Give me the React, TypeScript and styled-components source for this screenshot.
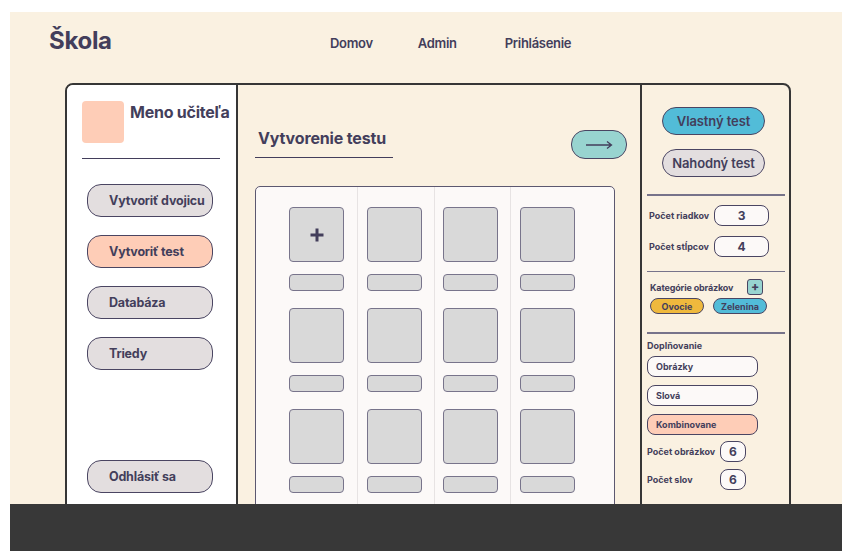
import styled, { createGlobalStyle } from 'styled-components';

const colors = {
  page: '#faf1e1',
  ink: '#433e5b',
  line: '#4a4562',
  frame: '#363636',
  white: '#ffffff',
  paper: '#fcf9f8',
  tile: '#d9d9d9',
  tileLine: '#78748b',
  soft: '#e3dedf',
  peach: '#fecdb7',
  teal: '#98d4d0',
  cyan: '#52bcd8',
  yellow: '#efb93d',
  divider: '#77738a',
  footer: '#383838',
};

const ROWS = 3;
const COLS = 4;

const App = () => {
  return (
    <>
      <GlobalStyle />
      <Frame>
        <Screen>
          <TopBar>
            <Logo>Škola</Logo>
            <Nav>
              <NavLink>Domov</NavLink>
              <NavLink>Admin</NavLink>
              <NavLink>Prihlásenie</NavLink>
            </Nav>
          </TopBar>

          <Card>
            <Side>
              <Profile>
                <Avatar />
                <TeacherName>Meno učiteľa</TeacherName>
              </Profile>
              <SideDivider />
              <Menu>
                <MenuButton>Vytvoriť dvojicu</MenuButton>
                <MenuButton $active>Vytvoriť test</MenuButton>
                <MenuButton>Databáza</MenuButton>
                <MenuButton>Triedy</MenuButton>
              </Menu>
              <Logout>Odhlásiť sa</Logout>
            </Side>

            <Main>
              <HeadingRow>
                <Heading>Vytvorenie testu</Heading>
                <NextButton>
                  <svg width="28" height="10" viewBox="0 0 28 10" fill="none">
                    <path d="M1 5H26.5M22 1.5L26.5 5L22 8.5" stroke={colors.ink} strokeWidth="1.3" />
                  </svg>
                </NextButton>
              </HeadingRow>

              <Board>
                {Array.from({ length: COLS }).map((_, col) => (
                  <Column key={col} $lead={col === 0} $last={col === COLS - 1}>
                    {Array.from({ length: ROWS }).map((__, row) => (
                      <Cell key={row}>
                        <Tile>
                          {col === 0 && row === 0 && (
                            <svg width="14" height="14" viewBox="0 0 14 14">
                              <path d="M7 0.5V13.5M0.5 7H13.5" stroke={colors.ink} strokeWidth="3" />
                            </svg>
                          )}
                        </Tile>
                        <Caption />
                      </Cell>
                    ))}
                  </Column>
                ))}
              </Board>
            </Main>

            <Panel>
              <Modes>
                <ModeButton $tone={colors.cyan}>Vlastný test</ModeButton>
                <ModeButton $tone={colors.soft}>Nahodný test</ModeButton>
              </Modes>

              <PanelDivider $top={17} />
              <Fields $gap={10}>
                <Field>
                  <FieldLabel $width={65}>Počet riadkov</FieldLabel>
                  <ValueBox $width={55}>3</ValueBox>
                </Field>
                <Field>
                  <FieldLabel $width={65}>Počet stĺpcov</FieldLabel>
                  <ValueBox $width={55}>4</ValueBox>
                </Field>
              </Fields>

              <PanelDivider $top={14} />
              <CategoryHead>
                <SmallTitle>Kategórie obrázkov</SmallTitle>
                <AddButton>+</AddButton>
              </CategoryHead>
              <Chips>
                <Chip $tone={colors.yellow}>Ovocie</Chip>
                <Chip $tone={colors.cyan}>Zelenina</Chip>
              </Chips>

              <PanelDivider $top={18} />
              <FillTitle>Doplňovanie</FillTitle>
              <Options>
                <Option>Obrázky</Option>
                <Option>Slová</Option>
                <Option $active>Kombinovane</Option>
              </Options>
              <Fields $gap={7} $top={6}>
                <Field $flush>
                  <FieldLabel $width={73}>Počet obrázkov</FieldLabel>
                  <ValueBox $width={26}>6</ValueBox>
                </Field>
                <Field $flush>
                  <FieldLabel $width={73}>Počet slov</FieldLabel>
                  <ValueBox $width={26}>6</ValueBox>
                </Field>
              </Fields>
            </Panel>
          </Card>
        </Screen>
        <Footer />
      </Frame>
    </>
  );
};

export default App;

const GlobalStyle = createGlobalStyle`
  *, *::before, *::after {
    box-sizing: border-box;
  }
  body {
    margin: 0;
    background: ${colors.white};
    font-family: Inter, 'Noto Sans', sans-serif;
    color: ${colors.ink};
  }
`;

const Frame = styled.div`
  width: 842px;
  height: 551px;
  padding: 12px 0 0 10px;
  display: flex;
  flex-direction: column;
  overflow: hidden;
`;

const Screen = styled.div`
  height: 492px;
  background: ${colors.page};
  overflow: hidden;
`;

const TopBar = styled.header`
  height: 71px;
  display: flex;
  align-items: flex-start;
  padding-left: 39px;
`;

const Logo = styled.h1`
  margin: 15px 0 0;
  font-size: 24px;
  line-height: 28px;
  font-weight: 700;
  letter-spacing: -0.3px;
  width: 281px;
`;

const Nav = styled.nav`
  display: flex;
  gap: 45px;
  margin-top: 23px;
`;

const NavLink = styled.span`
  font-size: 13px;
  line-height: 16px;
  font-weight: 600;
  letter-spacing: -0.3px;
  &:last-child {
    margin-left: 3px;
  }
`;

const Card = styled.section`
  margin-left: 55px;
  width: 726px;
  height: 470px;
  border: 2px solid ${colors.frame};
  border-radius: 8px;
  display: flex;
  overflow: hidden;
`;

const Side = styled.aside`
  width: 171px;
  background: ${colors.white};
  border-right: 2px solid ${colors.frame};
  padding: 16px 0 0 15px;
  display: flex;
  flex-direction: column;
`;

const Profile = styled.div`
  display: flex;
  gap: 6px;
`;

const Avatar = styled.div`
  width: 42px;
  height: 42px;
  border-radius: 4px;
  background: ${colors.peach};
`;

const TeacherName = styled.span`
  margin-top: 1px;
  font-size: 16px;
  line-height: 20px;
  font-weight: 700;
  letter-spacing: -0.25px;
  white-space: nowrap;
`;

const SideDivider = styled.div`
  width: 138px;
  height: 1px;
  background: ${colors.ink};
  margin-top: 15px;
`;

const Menu = styled.nav`
  margin: 25px 0 0 5px;
  display: flex;
  flex-direction: column;
  gap: 18px;
`;

const MenuButton = styled.div<{ $active?: boolean }>`
  width: 126px;
  height: 33px;
  border: 1.5px solid ${colors.line};
  border-radius: 14px;
  background: ${({ $active }) => ($active ? colors.peach : colors.soft)};
  padding-left: 21px;
  display: flex;
  align-items: center;
  font-size: 12.5px;
  font-weight: 700;
  letter-spacing: -0.2px;
  white-space: nowrap;
`;

const Logout = styled(MenuButton)`
  margin: 90px 0 0 5px;
`;

const Main = styled.main`
  width: 404px;
  border-right: 2px solid ${colors.frame};
  padding: 43px 13px 0 17px;
`;

const HeadingRow = styled.div`
  display: flex;
  justify-content: space-between;
  align-items: flex-start;
`;

const Heading = styled.h2`
  margin: 0;
  width: 138px;
  padding: 0 0 9px 3px;
  border-bottom: 1.5px solid ${colors.ink};
  font-size: 16px;
  line-height: 20px;
  font-weight: 700;
  letter-spacing: -0.15px;
  white-space: nowrap;
`;

const NextButton = styled.div`
  margin-top: 2px;
  width: 56px;
  height: 29px;
  border: 1.5px solid ${colors.line};
  border-radius: 14px;
  background: ${colors.teal};
  display: flex;
  align-items: center;
  justify-content: center;
`;

const Board = styled.div`
  margin-top: 27px;
  width: 360px;
  height: 360px;
  background: ${colors.paper};
  border: 1.5px solid #5c5870;
  border-radius: 5px;
  display: flex;
`;

const Column = styled.div<{ $lead?: boolean; $last?: boolean }>`
  width: ${({ $lead }) => ($lead ? '102px' : '76.5px')};
  flex: ${({ $last }) => ($last ? 1 : 'none')};
  padding: 20px 0 0 ${({ $lead }) => ($lead ? '33px' : '8.5px')};
  border-right: ${({ $last }) => ($last ? 'none' : '1.5px solid #e7e3e3')};
  display: flex;
  flex-direction: column;
  gap: 17px;
`;

const Cell = styled.div`
  display: flex;
  flex-direction: column;
  gap: 12px;
`;

const Tile = styled.div`
  width: 55px;
  height: 55px;
  background: ${colors.tile};
  border: 1.5px solid ${colors.tileLine};
  border-radius: 4px;
  display: flex;
  align-items: center;
  justify-content: center;
`;

const Caption = styled.div`
  width: 55px;
  height: 17px;
  background: ${colors.tile};
  border: 1.5px solid ${colors.tileLine};
  border-radius: 4px;
`;

const Panel = styled.aside`
  flex: 1;
  padding: 22px 4px 0 5px;
  display: flex;
  flex-direction: column;
`;

const Modes = styled.div`
  display: flex;
  flex-direction: column;
  gap: 14px;
  padding-left: 15px;
`;

const ModeButton = styled.div<{ $tone: string }>`
  width: 103px;
  height: 28px;
  border: 1.5px solid ${colors.line};
  border-radius: 14px;
  background: ${({ $tone }) => $tone};
  display: flex;
  align-items: center;
  justify-content: center;
  font-size: 13px;
  font-weight: 600;
  letter-spacing: -0.1px;
`;

const PanelDivider = styled.div<{ $top: number }>`
  height: 1.5px;
  background: ${colors.divider};
  margin: ${({ $top }) => $top}px 0 9px;
`;

const Fields = styled.div<{ $gap: number; $top?: number }>`
  display: flex;
  flex-direction: column;
  gap: ${({ $gap }) => $gap}px;
  margin-top: ${({ $top }) => $top ?? 0}px;
`;

const Field = styled.div<{ $flush?: boolean }>`
  display: flex;
  align-items: center;
  padding-left: ${({ $flush }) => ($flush ? '0' : '2px')};
`;

const FieldLabel = styled.span<{ $width: number }>`
  width: ${({ $width }) => $width}px;
  font-size: 9px;
  font-weight: 700;
  white-space: nowrap;
`;

const ValueBox = styled.div<{ $width: number }>`
  width: ${({ $width }) => $width}px;
  height: 21px;
  border: 1.5px solid ${colors.line};
  border-radius: 8px;
  background: ${colors.paper};
  display: flex;
  align-items: center;
  justify-content: center;
  font-size: 12px;
  font-weight: 700;
`;

const CategoryHead = styled.div`
  display: flex;
  align-items: center;
  padding-left: 3px;
  margin-top: -2px;
`;

const SmallTitle = styled.span`
  width: 97px;
  font-size: 9px;
  font-weight: 700;
  letter-spacing: -0.15px;
  white-space: nowrap;
`;

const AddButton = styled.div`
  width: 16px;
  height: 16px;
  border: 1.5px solid ${colors.line};
  border-radius: 3px;
  background: ${colors.teal};
  display: flex;
  align-items: center;
  justify-content: center;
  font-size: 12px;
  line-height: 1;
  font-weight: 800;
`;

const Chips = styled.div`
  display: flex;
  gap: 9px;
  margin: 3px 0 0 3px;
`;

const Chip = styled.div<{ $tone: string }>`
  width: 54px;
  height: 16px;
  border: 1.5px solid ${colors.line};
  border-radius: 8px;
  background: ${({ $tone }) => $tone};
  display: flex;
  align-items: center;
  justify-content: center;
  font-size: 9px;
  font-weight: 700;
`;

const FillTitle = styled.span`
  margin-top: -3px;
  font-size: 9px;
  line-height: 12px;
  font-weight: 700;
`;

const Options = styled.div`
  display: flex;
  flex-direction: column;
  gap: 8px;
  margin-top: 4px;
`;

const Option = styled.div<{ $active?: boolean }>`
  width: 111px;
  height: 21px;
  border: 1.5px solid ${colors.line};
  border-radius: 8px;
  background: ${({ $active }) => ($active ? colors.peach : colors.paper)};
  padding-left: 8px;
  display: flex;
  align-items: center;
  font-size: 9px;
  font-weight: 700;
`;

const Footer = styled.footer`
  height: 47px;
  background: ${colors.footer};
`;
